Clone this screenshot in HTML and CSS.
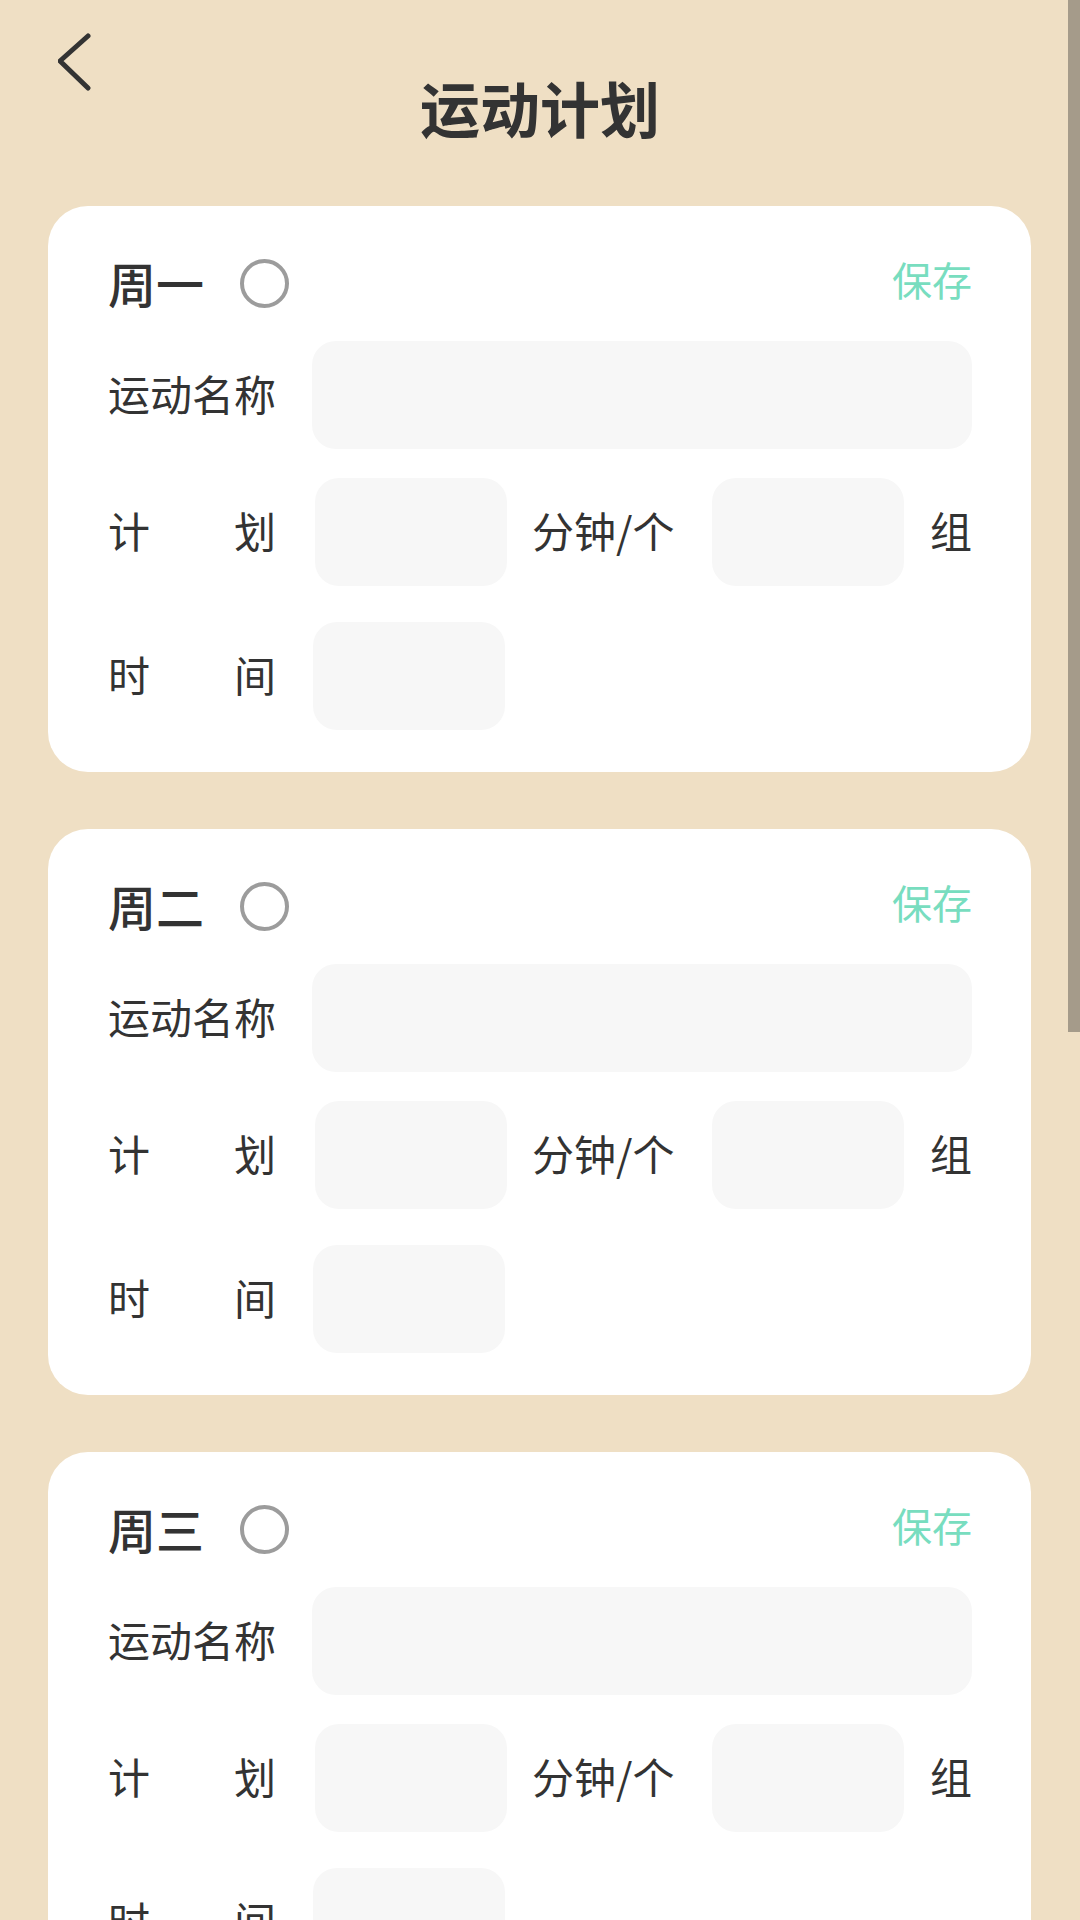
FILE: index.html
```html
<!DOCTYPE html>
<html lang="zh-CN">

<head>
    <meta charset="UTF-8">
    <meta name="viewport" content="width=device-width, initial-scale=1.0">
    <title>运动计划</title>
    <link rel="stylesheet" href="styles.css">
</head>

<body>
    <div class="header">
        <a class="back" href="#">
            <svg width="40" height="60" viewBox="0 0 40 60">
                <polyline points="30,4 2,29 30,56" fill="none" stroke="#333" stroke-width="5" stroke-linecap="round" stroke-linejoin="round" />
            </svg>
        </a>
        <h1 class="title">运动计划</h1>
    </div>

    <div class="list">
        <div class="card">
            <div class="card-head">
                <span class="day">周一</span>
                <span class="check"></span>
                <span class="save">保存</span>
            </div>
            <div class="row row-name">
                <label class="label">运动名称</label>
                <input class="field field-wide" type="text">
            </div>
            <div class="row row-plan">
                <label class="label label-split"><span>计</span><span>划</span></label>
                <input class="field field-small field-first" type="text">
                <span class="unit">分钟/个</span>
                <input class="field field-small field-second" type="text">
                <span class="unit unit-end">组</span>
            </div>
            <div class="row row-time">
                <label class="label label-split"><span>时</span><span>间</span></label>
                <input class="field field-small field-time" type="text">
            </div>
        </div>

        <div class="card">
            <div class="card-head">
                <span class="day">周二</span>
                <span class="check"></span>
                <span class="save">保存</span>
            </div>
            <div class="row row-name">
                <label class="label">运动名称</label>
                <input class="field field-wide" type="text">
            </div>
            <div class="row row-plan">
                <label class="label label-split"><span>计</span><span>划</span></label>
                <input class="field field-small field-first" type="text">
                <span class="unit">分钟/个</span>
                <input class="field field-small field-second" type="text">
                <span class="unit unit-end">组</span>
            </div>
            <div class="row row-time">
                <label class="label label-split"><span>时</span><span>间</span></label>
                <input class="field field-small field-time" type="text">
            </div>
        </div>

        <div class="card">
            <div class="card-head">
                <span class="day">周三</span>
                <span class="check"></span>
                <span class="save">保存</span>
            </div>
            <div class="row row-name">
                <label class="label">运动名称</label>
                <input class="field field-wide" type="text">
            </div>
            <div class="row row-plan">
                <label class="label label-split"><span>计</span><span>划</span></label>
                <input class="field field-small field-first" type="text">
                <span class="unit">分钟/个</span>
                <input class="field field-small field-second" type="text">
                <span class="unit unit-end">组</span>
            </div>
            <div class="row row-time">
                <label class="label label-split"><span>时</span><span>间</span></label>
                <input class="field field-small field-time" type="text">
            </div>
        </div>

        <div class="card">
            <div class="card-head">
                <span class="day">周四</span>
                <span class="check"></span>
                <span class="save">保存</span>
            </div>
            <div class="row row-name">
                <label class="label">运动名称</label>
                <input class="field field-wide" type="text">
            </div>
            <div class="row row-plan">
                <label class="label label-split"><span>计</span><span>划</span></label>
                <input class="field field-small field-first" type="text">
                <span class="unit">分钟/个</span>
                <input class="field field-small field-second" type="text">
                <span class="unit unit-end">组</span>
            </div>
            <div class="row row-time">
                <label class="label label-split"><span>时</span><span>间</span></label>
                <input class="field field-small field-time" type="text">
            </div>
        </div>
    </div>

    <div class="scroll-thumb"></div>
</body>

</html>
```

FILE: styles.css
```css
html,
body {
    margin: 0;
    padding: 0;
    height: 100%;
    overflow: hidden;
}

body {
    background-color: #efdfc4;
    font-family: "Noto Sans CJK SC", "Noto Sans", sans-serif;
    color: #333;
}

.header {
    position: relative;
    height: 206px;
}

.back {
    position: absolute;
    left: 58px;
    top: 32px;
    display: block;
    width: 40px;
    height: 60px;
}

.title {
    margin: 0;
    padding-top: 64px;
    text-align: center;
    font-size: 60px;
    font-weight: bold;
    line-height: 86px;
    color: #333;
}

.list {
    padding: 0 49px 0 48px;
}

.card {
    background-color: #fff;
    border-radius: 40px;
    padding: 53px 59px 42px 60px;
    margin-bottom: 57px;
}

.card-head {
    display: flex;
    align-items: center;
    height: 48px;
}

.day {
    font-size: 48px;
    font-weight: 500;
    line-height: 48px;
    margin-top: -2px;
}

.check {
    box-sizing: border-box;
    width: 49px;
    height: 49px;
    margin-left: 36px;
    border: 4.5px solid #9c9c9c;
    border-radius: 50%;
}

.save {
    margin-left: auto;
    font-size: 40px;
    line-height: 48px;
    color: #78ddbf;
    margin-top: -8px;
}

.row {
    display: flex;
    align-items: center;
}

.row-name {
    margin-top: 34px;
}

.row-plan {
    margin-top: 29px;
}

.row-time {
    margin-top: 36px;
}

.label {
    width: 168px;
    flex-shrink: 0;
    font-size: 42px;
    line-height: 50px;
    margin-top: -4px;
}

.label-split {
    display: flex;
    justify-content: space-between;
}

.field {
    box-sizing: border-box;
    height: 108px;
    border: none;
    border-radius: 24px;
    background-color: #f7f7f7;
    outline: none;
    padding: 0 20px;
    font-family: inherit;
    font-size: 40px;
}

.field-wide {
    flex: 1;
    margin-left: 36px;
}

.field-small {
    width: 192px;
}

.field-first {
    margin-left: 39px;
}

.field-second {
    margin-left: 38px;
}

.field-time {
    margin-left: 37px;
}

.unit {
    margin-left: 25px;
    font-size: 42px;
    line-height: 50px;
    margin-top: -4px;
}

.unit-end {
    margin-left: auto;
}

.scroll-thumb {
    position: fixed;
    top: 0;
    right: 0;
    width: 12px;
    height: 1032px;
    background-color: #a59b8a;
}
```
